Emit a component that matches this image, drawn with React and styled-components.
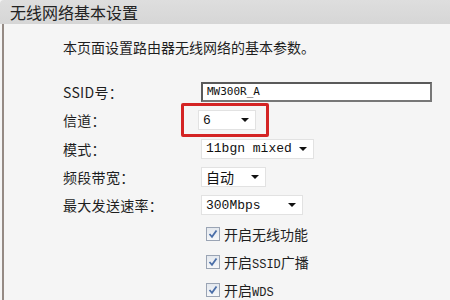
import React from "react";
import styled, { createGlobalStyle } from "styled-components";

const Global = createGlobalStyle`
  html, body { margin: 0; padding: 0; background: #f5f5f5; }
  body {
    width: 450px;
    height: 300px;
    overflow: hidden;
    font-family: "Noto Sans CJK SC", "Liberation Sans", sans-serif;
    color: #1e1e1e;
  }
`;

const Panel = styled.div`
  width: 450px;
  height: 300px;
  display: flex;
  flex-direction: column;
`;

const Header = styled.div`
  height: 27px;
  display: flex;
  align-items: center;
  padding-left: 10px;
  background: linear-gradient(#dedede, #d6d6d6);
  border-top-left-radius: 4px;
  font-size: 16px;
  color: #222;
  box-sizing: border-box;
`;

const Body = styled.div`
  flex: 1;
  margin-left: 2px;
  border-left: 2px solid #958a84;
  background: #f5f5f5;
  padding: 14px 0 0 59px;
`;

const Intro = styled.div`
  font-size: 14px;
  line-height: 18px;
  margin-bottom: 22px;
`;

const Form = styled.div`
  display: grid;
  grid-template-columns: 138px 1fr;
  grid-auto-rows: 28.3px;
  align-items: center;
`;

const Label = styled.div`
  font-size: 14px;
  letter-spacing: 0.3px;
`;

const TextInput = styled.div`
  width: 231px;
  height: 20px;
  box-sizing: border-box;
  border: 2px solid #5a5a5a;
  border-right-color: #777;
  border-bottom-color: #777;
  background: #fff;
  font-family: "DejaVu Sans Mono", "Liberation Mono", monospace;
  font-size: 11px;
  line-height: 16px;
  padding-left: 4px;
  color: #111;
`;

const Highlight = styled.div`
  margin-left: -20px;
  width: 88px;
  height: 34px;
  box-sizing: border-box;
  border: 3px solid #d42424;
  border-radius: 2px;
  display: flex;
  align-items: center;
  padding-left: 14px;
`;

const Select = styled.div`
  width: ${(p) => p.w}px;
  height: 20px;
  box-sizing: border-box;
  border: 1px solid #e2e2e2;
  background: #fff;
  display: flex;
  align-items: center;
  justify-content: space-between;
  padding: 0 6px 0 4px;
  font-family: ${(p) =>
    p.cjk
      ? `"Noto Sans CJK SC", sans-serif`
      : `"Liberation Mono", "DejaVu Sans Mono", monospace`};
  font-size: ${(p) => (p.cjk ? 14 : 13)}px;
  color: #111;
`;

const Arrow = styled.span`
  width: 0;
  height: 0;
  border-left: 4px solid transparent;
  border-right: 4px solid transparent;
  border-top: 4px solid #111;
`;

const CheckRow = styled.div`
  grid-column: 2;
  display: flex;
  align-items: center;
  gap: 4px;
  font-size: 14px;
`;

const Box = styled.span`
  width: 14px;
  height: 14px;
  box-sizing: border-box;
  margin-left: 5px;
  border: 1px solid #9aa4b4;
  background: linear-gradient(#e4e8ee, #f6f7f9);
  display: flex;
  align-items: center;
  justify-content: center;
`;

const Mono = styled.span`
  font-family: "Liberation Mono", "DejaVu Sans Mono", monospace;
  font-size: 12px;
`;

function Check({ children }) {
  return (
    <CheckRow>
      <Box>
        <svg width="10" height="10" viewBox="0 0 10 10">
          <path d="M1.5 5 L4 7.8 L8.5 1.5" fill="none" stroke="#4a6ea8" strokeWidth="1.8" />
        </svg>
      </Box>
      <span>{children}</span>
    </CheckRow>
  );
}

export default function App() {
  return (
    <Panel>
      <Global />
      <Header>无线网络基本设置</Header>
      <Body>
        <Intro>本页面设置路由器无线网络的基本参数。</Intro>
        <Form>
          <Label>SSID号：</Label>
          <TextInput>MW300R_A</TextInput>
          <Label>信道：</Label>
          <Highlight>
            <Select w={58}>
              6 <Arrow />
            </Select>
          </Highlight>
          <Label>模式：</Label>
          <Select w={113}>
            11bgn mixed <Arrow />
          </Select>
          <Label>频段带宽：</Label>
          <Select w={65} cjk>
            自动 <Arrow />
          </Select>
          <Label>最大发送速率：</Label>
          <Select w={102}>
            300Mbps <Arrow />
          </Select>
          <Check>开启无线功能</Check>
          <Check>
            开启<Mono>SSID</Mono>广播
          </Check>
          <Check>
            开启<Mono>WDS</Mono>
          </Check>
        </Form>
      </Body>
    </Panel>
  );
}
